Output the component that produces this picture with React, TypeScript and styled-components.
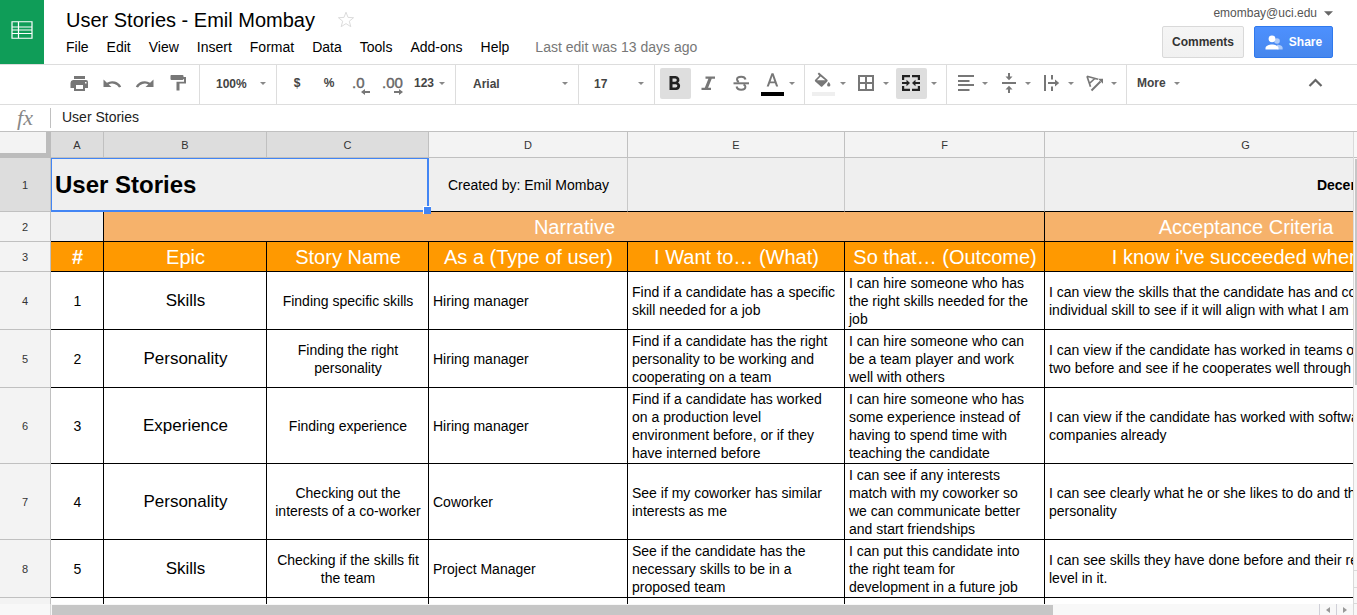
import React from 'react';
import styled, { createGlobalStyle, css } from 'styled-components';

const GlobalStyle = createGlobalStyle`
  *, *::before, *::after { box-sizing: border-box; }
  body { margin: 0; background: #fff; font-family: "Liberation Sans", Arial, sans-serif; color: #000; }
  button, input, select { font: inherit; color: inherit; margin: 0; padding: 0; border: 0; background: none; }
  button { cursor: pointer; }
`;

const Page = styled.div`
  display: flex;
  flex-direction: column;
  height: 100vh;
  overflow: hidden;
`;

/* ---------- header ---------- */

const Header = styled.header`
  display: flex;
  flex: none;
  height: 64px;
`;

const Logo = styled.a`
  display: flex;
  flex: none;
  align-items: center;
  justify-content: center;
  width: 44px;
  padding-bottom: 4px;
  background: #0f9d58;
`;

const TitleArea = styled.div`
  display: flex;
  flex: 1;
  flex-direction: column;
  min-width: 0;
  padding: 8px 0 0 22px;
`;

const TitleRow = styled.div`
  display: flex;
  align-items: center;
  gap: 22px;
  height: 24px;
`;

const Title = styled.h1`
  margin: 0;
  font-size: 20px;
  font-weight: 400;
  line-height: 24px;
  white-space: nowrap;
`;

const StarButton = styled.button`
  display: flex;
`;

const Menu = styled.nav`
  display: flex;
  align-items: center;
  gap: 18px;
  height: 30px;
  font-size: 14px;
  white-space: nowrap;
`;

const EditNote = styled.a`
  margin-left: 8px;
  color: #777;
  text-decoration: none;
`;

const Account = styled.div`
  display: flex;
  flex: none;
  flex-direction: column;
  align-items: flex-end;
  padding: 4px 24px 0 0;
`;

const Email = styled.button`
  display: flex;
  align-items: center;
  gap: 7px;
  height: 18px;
  font-size: 12px;
  color: #555;
`;

const Actions = styled.div`
  display: flex;
  gap: 10px;
  padding-top: 4px;
`;

const ActionButton = styled.button<{ $primary?: boolean }>`
  display: flex;
  align-items: center;
  justify-content: center;
  gap: 6px;
  width: ${p => (p.$primary ? 79 : 82)}px;
  height: 32px;
  border: 1px solid ${p => (p.$primary ? '#3079ed' : '#d9d9d9')};
  border-radius: 2px;
  background: ${p => (p.$primary ? 'linear-gradient(#4d90fe, #4787ed)' : 'linear-gradient(#f5f5f5, #f1f1f1)')};
  color: ${p => (p.$primary ? '#fff' : '#333')};
  font-size: 12px;
  font-weight: 700;
`;

/* ---------- toolbar ---------- */

const Toolbar = styled.div`
  display: flex;
  flex: none;
  height: 41px;
  padding-left: 59px;
  border: solid #ddd;
  border-width: 1px 0;
  color: #444;
  font-size: 12px;
  font-weight: 700;
`;

const Group = styled.div<{ $gap?: number }>`
  display: flex;
  flex: none;
  align-items: flex-start;
  gap: ${p => p.$gap ?? 2}px;
  padding: 3px 5px 0;
  border-right: 1px solid #ddd;
`;

const ToolButton = styled.button<{ $active?: boolean; $width?: number }>`
  display: flex;
  flex: none;
  align-items: center;
  justify-content: center;
  width: ${p => p.$width ?? 31}px;
  height: 31px;
  && { padding: 0 1px 1px 0; }
  border-radius: 2px;
  background: ${p => (p.$active ? '#dedede' : 'transparent')};
  color: ${p => (p.$active ? '#222' : '#777')};
`;

const TextButton = styled(ToolButton)`
  gap: 5px;
  color: #444;
`;

const Split = styled.div`
  display: flex;
  align-items: center;
`;

const Picker = styled.label<{ $width: number; $indent: number }>`
  display: grid;
  flex: none;
  align-items: center;
  align-content: start;
  width: ${p => p.$width}px;
  border-right: 1px solid #ddd;
  select, svg { grid-area: 1 / 1; }
  select {
    width: 100%;
    height: 37px;
    padding-left: ${p => p.$indent}px;
    appearance: none;
    outline: none;
  }
  svg { justify-self: end; margin-right: 10px; pointer-events: none; }
`;

const MoreButton = styled.button`
  display: flex;
  align-items: center;
  gap: 8px;
  height: 36px;
  && { padding: 0 10px; }
`;

const Collapse = styled.div`
  margin-left: auto;
  padding: 3px 26px 0 0;
`;

/* ---------- formula bar ---------- */

const FormulaBar = styled.label`
  display: flex;
  flex: none;
  align-items: flex-start;
  height: 27px;
  border-bottom: 1px solid #c0c0c0;
`;

const Fx = styled.span`
  width: 51px;
  margin-top: 3px;
  border-right: 1px solid #c0c0c0;
  color: #888;
  font: italic 22px/20px "Liberation Serif", serif;
  text-align: center;
`;

const FormulaInput = styled.input`
  flex: 1;
  height: 24px;
  && { padding-left: 11px; }
  outline: none;
  font-size: 14px;
  color: #222;
`;

/* ---------- sheet ---------- */

const Sheet = styled.main`
  display: flex;
  flex: 1;
  min-height: 0;
`;

const SheetColumn = styled.div`
  display: flex;
  flex: 1;
  flex-direction: column;
  min-width: 0;
`;

const Viewport = styled.div`
  flex: 1;
  min-height: 0;
  overflow: hidden;
`;

const Table = styled.table`
  width: 1447px;
  table-layout: fixed;
  border-collapse: separate;
  border-spacing: 0;
  font-size: 14px;
  line-height: 18px;
`;

const Col = styled.col<{ $width: number }>`
  width: ${p => p.$width}px;
`;

const Row = styled.tr<{ $height: number }>`
  height: ${p => p.$height}px;
`;

const Heading = styled.th<{ $selected?: boolean }>`
  padding: 0;
  border: solid #c0c0c0;
  border-width: 0 1px 1px 0;
  background: ${p => (p.$selected ? '#ddd' : '#f3f3f3')};
  color: #333;
  font-size: 11px;
  font-weight: 400;
  line-height: 12px;
`;

const Corner = styled.td`
  padding: 0;
  border: solid #bcbcbc;
  border-width: 0 5px 5px 0;
  background: #f3f3f3;
`;

type Tone = 'plain' | 'top' | 'blank' | 'band' | 'head';

const tones = {
  plain: css`background: #fff;`,
  top: css`background: #efefef; border-right-color: #c8c8c8;`,
  blank: css`background: #efefef;`,
  band: css`background: #f6b26b; color: #fff; font-size: 20px; line-height: 24px;`,
  head: css`background: #f90; color: #fff; font-size: 20px; line-height: 24px;`,
};

const Cell = styled.td<{ $tone?: Tone; $align?: string; $large?: boolean; $bold?: boolean; $nowrap?: boolean }>`
  position: relative;
  padding: 0 3px 0 4px;
  border: solid #000;
  border-width: 0 1px 1px 0;
  text-align: ${p => p.$align ?? 'left'};
  vertical-align: middle;
  white-space: ${p => (p.$nowrap ? 'pre' : 'pre-line')};
  ${p => tones[p.$tone ?? 'plain']}
  ${p => p.$large && css`font-size: 17px;`}
  ${p => p.$bold && css`font-weight: 700;`}
`;

const SheetTitle = styled.strong`
  font-size: 24px;
  line-height: 28px;
`;

const Selection = styled.span`
  position: absolute;
  z-index: 1;
  inset: 0 -1px -1px 0;
  border: solid #4285f4;
  border-width: 1px 2px 2px 1px;
  pointer-events: none;
  &::after {
    content: '';
    position: absolute;
    right: -4px;
    bottom: -4px;
    width: 8px;
    height: 8px;
    border: solid #fff;
    border-width: 1px 0 0 1px;
    background: #4285f4;
  }
`;

const HScroll = styled.div`
  display: flex;
  flex: none;
  height: 11px;
  background: #f8f8f8;
`;

const HScrollGutter = styled.div`
  width: 51px;
  border-right: 1px solid #d9d9d9;
`;

const HScrollTrack = styled.div`
  flex: 1;
  padding: 1px 0 0 1px;
`;

const HScrollThumb = styled.div`
  width: 79%;
  height: 10px;
  background: #c6c6c6;
`;

const HScrollButton = styled.button`
  display: flex;
  align-items: center;
  justify-content: center;
  width: 17px;
  && { border-left: 1px solid #d0d0d8; }
`;

const VScroll = styled.div`
  display: flex;
  flex: none;
  flex-direction: column;
  width: 4px;
  border-left: 1px solid #d9d9d9;
  background: #f8f8f8;
`;

const VScrollTop = styled.div`
  height: 26px;
  border-bottom: 1px solid #c0c0c0;
`;

const VScrollTrack = styled.div`
  flex: 1;
  padding: 1px 0 0 1px;
`;

const VScrollThumb = styled.div`
  height: 55%;
  background: #c6c6c6;
`;

const VScrollStep = styled.div<{ $height: number }>`
  height: ${p => p.$height}px;
  border-top: 1px solid #d9d9d9;
`;

/* ---------- icons ---------- */

const Icon = ({ children }: { children: React.ReactNode }) => (
  <svg width="20" height="20" viewBox="0 0 20 20" fill="currentColor" aria-hidden="true">
    {children}
  </svg>
);

/* a glyph above a bar that shows the current colour */
const SwatchIcon = ({ color, children }: { color: string; children: React.ReactNode }) => (
  <svg width="25" height="26" viewBox="0 0 25 26" fill="currentColor" aria-hidden="true">
    {children}
    <path d="M2 22h23v4H2z" fill={color} />
  </svg>
);

const Caret = ({ color = '#888', wide = false }: { color?: string; wide?: boolean }) => (
  <svg width={wide ? 9 : 6} height={wide ? 5 : 3} viewBox="0 0 8 4" aria-hidden="true">
    <path d="M0 0h8L4 4z" fill={color} />
  </svg>
);

const SheetsIcon = () => (
  <svg width="22" height="18" viewBox="0 0 22 18" fill="none" stroke="#fff" aria-hidden="true">
    <path d="M1 .75h20v16.5H1zM.5 6h21M.5 9h21M.5 12.500h21M7.500 .5v17" strokeWidth="1.2" />
  </svg>
);

const StarIcon = () => (
  <svg width="18" height="18" viewBox="0 0 18 18" fill="none" stroke="#dcdcdc" aria-hidden="true">
    <path d="M9 1.2l2 5.2 5.600.3-4.300 3.500 1.500 5.500L9 12.600l-4.800 3.100 1.500-5.500L1.400 6.700 7 6.400z" />
  </svg>
);

const PeopleIcon = () => (
  <svg width="18" height="15" viewBox="0 0 18 15" fill="#fff" aria-hidden="true">
    <g opacity=".55">
      <circle cx="12" cy="6" r="2.8" />
      <path d="M12 9.8c3 0 5.600 1.300 5.600 3v1.700h-5z" />
    </g>
    <circle cx="7" cy="3.800" r="3.400" />
    <path d="M.5 14.500v-1.600c0-2.200 3.600-3.500 6.500-3.500s6.500 1.300 6.500 3.500v1.600z" />
  </svg>
);

const PrintIcon = () => (
  <Icon>
    <path fillRule="evenodd" d="M5 3h11v3H5zM4 7h13a2 2 0 0 1 2 2v6h-3v3H5v-3H1.500V10a3 3 0 0 1 2.500-3zM7 12v4h7v-4zM16 9v1.500h1.500V9z" />
  </Icon>
);

const UndoIcon = () => (
  <Icon>
    <path d="M1.500 6.500V14H9.500L6.700 11.400A8 8 0 0 1 17 14.600l2.200-.8A10 10 0 0 0 4.900 9.800z" />
  </Icon>
);

const RedoIcon = () => (
  <Icon>
    <path d="M18.500 6.500V14H10.500l2.800-2.600A8 8 0 0 0 3 14.600l-2.200-.8A10 10 0 0 1 15.100 9.800z" />
  </Icon>
);

const PaintIcon = () => (
  <Icon>
    <path d="M3 2h11.500a1 1 0 0 1 1 1v1H18v6.500h-6.500V17.500h-3V8.700H16V6h-.5a1 1 0 0 1-1 1H3.500a1 1 0 0 1-1-1V3a1 1 0 0 1 .5-1z" />
  </Icon>
);

const BoldIcon = () => (
  <Icon>
    <path fillRule="evenodd" d="M4.500 3h6.200a3.800 3.800 0 0 1 2.400 6.700A3.900 3.900 0 0 1 11.200 17H4.500zM7.500 5.500v3.200h2.700a1.600 1.600 0 0 0 0-3.200zM7.500 11.200v3.300h3.200a1.650 1.650 0 0 0 0-3.300z" />
  </Icon>
);

const ItalicIcon = () => (
  <Icon>
    <path d="M7.500 3.500H17V5.800h-3.300l-3.600 8.900H13V17H3.500v-2.300h3.300L10.400 5.800H7.500z" />
  </Icon>
);

const StrikeIcon = () => (
  <Icon>
    <path d="M2.500 9.300h15.500v2H2.500z" />
    <path d="M14.500 6.500C14 4.500 12.300 3.800 10.200 3.800 7.600 3.800 6 4.800 6 6.500c0 1.100.7 1.900 1.800 2.500M12.500 11.500c1.200.5 1.900 1.200 1.900 2.300 0 1.800-1.700 2.900-4.200 2.900-2.500 0-4.300-1.100-4.600-3.200" fill="none" stroke="currentColor" strokeWidth="2" />
  </Icon>
);

const TextColorIcon = () => (
  <SwatchIcon color="#000">
    <path fillRule="evenodd" d="M12.500 3.300h2l4.700 13.200h-2.100l-1.200-3.200h-4.900l-1.200 3.200H7.700zM11.600 11.400h3.700l-1.900-5.400z" />
  </SwatchIcon>
);

const FillIcon = () => (
  <SwatchIcon color="#efefef">
    <path fillRule="evenodd" d="M7.700 3.800L9 2.500l8.300 7.300a1.200 1.200 0 0 1 0 1.700l-4.800 4.800a1.300 1.300 0 0 1-1.900 0L5.200 11.400a1.200 1.200 0 0 1 0-1.700l4-4zM7 10.300h8.300l-4.700-3.800zM18.700 12s1.700 1.800 1.700 2.900a1.600 1.600 0 0 1-3.300 0c0-1.100 1.600-2.900 1.600-2.900z" />
  </SwatchIcon>
);

const BorderIcon = () => (
  <Icon>
    <path fillRule="evenodd" d="M2 2h16v16H2zM4 4v5h5V4zm7 0v5h5V4zM4 11v5h5v-5zm7 0v5h5v-5z" />
  </Icon>
);

const MergeIcon = () => (
  <Icon>
    <path d="M1 2h8v2.200H3.200V7H1zM19 2h-8v2.200h5.800V7H19zM1 18h8v-2.200H3.200V13H1zM19 18h-8v-2.200h5.800V13H19zM1 9h4.500V6.800L9 10l-3.500 3.200V11H1zM19 9h-4.500V6.800L11 10l3.500 3.200V11H19z" />
  </Icon>
);

const AlignIcon = () => (
  <Icon>
    <path d="M3 2h16v2H3zM3 7h11.500v2H3zM3 11h16v2H3zM3 16h11.500v2H3z" />
  </Icon>
);

const VAlignIcon = () => (
  <Icon>
    <path d="M4 9h14v2H4zM10 0h2v3.500h2.500L11 7.200 7.500 3.500H10zM10 20h2v-3.500h2.500L11 12.800 7.500 16.500H10z" />
  </Icon>
);

const WrapIcon = () => (
  <Icon>
    <path d="M3 2h2v16H3zM10 2h2v4.500h-2zM10 13.500h2V18h-2zM7 9h7V6.500l4.200 3.500-4.200 3.500V11H7z" />
  </Icon>
);

const RotateIcon = () => (
  <Icon>
    <path d="M3 3.200l11 3M3 3.200l3.500 10.500M10.800 5.500L5.400 10.500" fill="none" stroke="currentColor" strokeWidth="1.700" />
    <path d="M7.500 17.500L16.500 8.500" fill="none" stroke="currentColor" strokeWidth="2" />
    <path d="M19 5.800v5l-5-5z" />
  </Icon>
);

const DecreaseDecimalIcon = () => (
  <svg width="20" height="26" viewBox="0 0 20 26" aria-hidden="true">
    <text x="1" y="18" fontSize="15" fontWeight="400" fill="#666" stroke="#666" strokeWidth=".4">.0</text>
    <path d="M10 22l4-3v2h5v2h-5v2z" fill="#777" />
  </svg>
);

const IncreaseDecimalIcon = () => (
  <svg width="22" height="26" viewBox="0 0 22 26" aria-hidden="true">
    <text x="0" y="18" fontSize="15" fontWeight="400" fill="#666" stroke="#666" strokeWidth=".4">.00</text>
    <path d="M21 22l-4-3v2h-5v2h5v2z" fill="#777" />
  </svg>
);

const ChevronUp = () => (
  <Icon>
    <path d="M4.500 13L10.500 7l6 6" fill="none" stroke="#666" strokeWidth="2.200" />
  </Icon>
);

/* ---------- data ---------- */

const menus = ['File', 'Edit', 'View', 'Insert', 'Format', 'Data', 'Tools', 'Add-ons', 'Help'];
const columns = [
  { name: 'A', width: 53 },
  { name: 'B', width: 163 },
  { name: 'C', width: 162 },
  { name: 'D', width: 199 },
  { name: 'E', width: 217 },
  { name: 'F', width: 200 },
  { name: 'G', width: 402 },
];

interface Story {
  height: number;
  epic: string;
  name: string;
  user: string;
  want: string;
  outcome: string;
  criteria: string;
}

const stories: Story[] = [
  {
    height: 58,
    epic: 'Skills',
    name: 'Finding specific skills',
    user: 'Hiring manager',
    want: 'Find if a candidate has a specific\nskill needed for a job',
    outcome: 'I can hire someone who has\nthe right skills needed for the\njob',
    criteria: 'I can view the skills that the candidate has and compare each\nindividual skill to see if it will align with what I am looking for',
  },
  {
    height: 58,
    epic: 'Personality',
    name: 'Finding the right\npersonality',
    user: 'Hiring manager',
    want: 'Find if a candidate has the right\npersonality to be working and\ncooperating on a team',
    outcome: 'I can hire someone who can\nbe a team player and work\nwell with others',
    criteria: 'I can view if the candidate has worked in teams of at least\ntwo before and see if he cooperates well through reviews',
  },
  {
    height: 76,
    epic: 'Experience',
    name: 'Finding experience',
    user: 'Hiring manager',
    want: 'Find if a candidate has worked\non a production level\nenvironment before, or if they\nhave interned before',
    outcome: 'I can hire someone who has\nsome experience instead of\nhaving to spend time with\nteaching the candidate',
    criteria: 'I can view if the candidate has worked with software\ncompanies already',
  },
  {
    height: 76,
    epic: 'Personality',
    name: 'Checking out the\ninterests of a co-worker',
    user: 'Coworker',
    want: 'See if my coworker has similar\ninterests as me',
    outcome: 'I can see if any interests\nmatch with my coworker so\nwe can communicate better\nand start friendships',
    criteria: 'I can see clearly what he or she likes to do and their\npersonality',
  },
  {
    height: 58,
    epic: 'Skills',
    name: 'Checking if the skills fit\nthe team',
    user: 'Project Manager',
    want: 'See if the candidate has the\nnecessary skills to be in a\nproposed team',
    outcome: 'I can put this candidate into\nthe right team for\ndevelopment in a future job',
    criteria: 'I can see skills they have done before and their relative\nlevel in it.',
  },
];

const Tool = ({ label, active, width, children }: { label: string; active?: boolean; width?: number; children: React.ReactNode }) => (
  <ToolButton type="button" aria-label={label} $active={active} $width={width}>
    {children}
  </ToolButton>
);

const SplitTool = ({ label, active, children }: { label: string; active?: boolean; children: React.ReactNode }) => (
  <Split>
    <Tool label={label} active={active} width={active ? 31 : 26}>{children}</Tool>
    <Tool label={`${label} options`} width={14}><Caret /></Tool>
  </Split>
);

export default function App() {
  return (
    <Page>
      <GlobalStyle />
      <Header>
        <Logo href="#" aria-label="Sheets home"><SheetsIcon /></Logo>
        <TitleArea>
          <TitleRow>
            <Title>User Stories - Emil Mombay</Title>
            <StarButton type="button" aria-label="Star"><StarIcon /></StarButton>
          </TitleRow>
          <Menu>
            {menus.map(name => <button type="button" key={name}>{name}</button>)}
            <EditNote href="#">Last edit was 13 days ago</EditNote>
          </Menu>
        </TitleArea>
        <Account>
          <Email type="button">emombay@uci.edu <Caret wide color="#666" /></Email>
          <Actions>
            <ActionButton type="button">Comments</ActionButton>
            <ActionButton type="button" $primary><PeopleIcon />Share</ActionButton>
          </Actions>
        </Account>
      </Header>

      <Toolbar>
        <Group>
          <Tool label="Print"><PrintIcon /></Tool>
          <Tool label="Undo"><UndoIcon /></Tool>
          <Tool label="Redo"><RedoIcon /></Tool>
          <Tool label="Paint format"><PaintIcon /></Tool>
        </Group>
        <Picker $width={77} $indent={16}>
          <select aria-label="Zoom"><option>100%</option></select>
          <Caret />
        </Picker>
        <Group $gap={1}>
          <TextButton type="button" aria-label="Format as currency">$</TextButton>
          <TextButton type="button" aria-label="Format as percent">%</TextButton>
          <Tool label="Decrease decimal places"><DecreaseDecimalIcon /></Tool>
          <Tool label="Increase decimal places"><IncreaseDecimalIcon /></Tool>
          <TextButton type="button" $width={40}>123 <Caret /></TextButton>
        </Group>
        <Picker $width={123} $indent={17}>
          <select aria-label="Font"><option>Arial</option></select>
          <Caret />
        </Picker>
        <Picker $width={76} $indent={15}>
          <select aria-label="Font size"><option>17</option></select>
          <Caret />
        </Picker>
        <Group>
          <Tool label="Bold" active><BoldIcon /></Tool>
          <Tool label="Italic"><ItalicIcon /></Tool>
          <Tool label="Strikethrough"><StrikeIcon /></Tool>
          <SplitTool label="Text color"><TextColorIcon /></SplitTool>
        </Group>
        <Group $gap={3}>
          <SplitTool label="Fill color"><FillIcon /></SplitTool>
          <SplitTool label="Borders"><BorderIcon /></SplitTool>
          <SplitTool label="Merge cells" active><MergeIcon /></SplitTool>
        </Group>
        <Group $gap={3}>
          <SplitTool label="Horizontal align"><AlignIcon /></SplitTool>
          <SplitTool label="Vertical align"><VAlignIcon /></SplitTool>
          <SplitTool label="Text wrapping"><WrapIcon /></SplitTool>
          <SplitTool label="Text rotation"><RotateIcon /></SplitTool>
        </Group>
        <MoreButton type="button">More <Caret /></MoreButton>
        <Collapse><Tool label="Hide the menus"><ChevronUp /></Tool></Collapse>
      </Toolbar>

      <FormulaBar>
        <Fx>fx</Fx>
        <FormulaInput aria-label="Formula" defaultValue="User Stories" />
      </FormulaBar>

      <Sheet>
        <SheetColumn>
          <Viewport>
            <Table>
              <colgroup>
                <Col $width={51} />
                {columns.map(c => <Col key={c.name} $width={c.width} />)}
              </colgroup>
              <thead>
                <Row $height={26}>
                  <Corner />
                  {columns.map((c, i) => <Heading key={c.name} scope="col" $selected={i < 3}>{c.name}</Heading>)}
                </Row>
              </thead>
              <tbody>
                <Row $height={54}>
                  <Heading scope="row" $selected>1</Heading>
                  <Cell colSpan={3} $tone="top">
                    <SheetTitle>User Stories</SheetTitle>
                    <Selection />
                  </Cell>
                  <Cell $tone="top" $align="center">Created by: Emil Mombay</Cell>
                  <Cell $tone="top" />
                  <Cell $tone="top" />
                  <Cell $tone="top" $align="right" $bold>December 05, 2016</Cell>
                </Row>
                <Row $height={30}>
                  <Heading scope="row">2</Heading>
                  <Cell $tone="blank" />
                  <Cell colSpan={5} $tone="band" $align="center">Narrative</Cell>
                  <Cell $tone="band" $align="center">Acceptance Criteria</Cell>
                </Row>
                <Row $height={30}>
                  <Heading scope="row">3</Heading>
                  <Cell $tone="head" $align="center" $bold>#</Cell>
                  <Cell $tone="head" $align="center">Epic</Cell>
                  <Cell $tone="head" $align="center">Story Name</Cell>
                  <Cell $tone="head" $align="center">As a (Type of user)</Cell>
                  <Cell $tone="head" $align="center">I Want to… (What)</Cell>
                  <Cell $tone="head" $align="center">So that… (Outcome)</Cell>
                  <Cell $tone="head" $align="center">I know i've succeeded when…</Cell>
                </Row>
                {stories.map((s, i) => (
                  <Row key={i} $height={s.height}>
                    <Heading scope="row">{i + 4}</Heading>
                    <Cell $align="center">{i + 1}</Cell>
                    <Cell $align="center" $large>{s.epic}</Cell>
                    <Cell $align="center" $nowrap>{s.name}</Cell>
                    <Cell>{s.user}</Cell>
                    <Cell $nowrap>{s.want}</Cell>
                    <Cell $nowrap>{s.outcome}</Cell>
                    <Cell $nowrap>{s.criteria}</Cell>
                  </Row>
                ))}
                <Row $height={58}>
                  <Heading scope="row" />
                  {columns.map(c => <Cell key={c.name} />)}
                </Row>
              </tbody>
            </Table>
          </Viewport>
          <HScroll>
            <HScrollGutter />
            <HScrollTrack><HScrollThumb /></HScrollTrack>
            <HScrollButton type="button" aria-label="Scroll left">
              <svg width="4" height="6" viewBox="0 0 4 6" aria-hidden="true"><path d="M4 0v6L0 3z" fill="#999" /></svg>
            </HScrollButton>
            <HScrollButton type="button" aria-label="Scroll right">
              <svg width="4" height="6" viewBox="0 0 4 6" aria-hidden="true"><path d="M0 0v6l4-3z" fill="#999" /></svg>
            </HScrollButton>
          </HScroll>
        </SheetColumn>
        <VScroll>
          <VScrollTop />
          <VScrollTrack><VScrollThumb /></VScrollTrack>
          <VScrollStep $height={17} />
          <VScrollStep $height={16} />
          <VScrollStep $height={12} />
        </VScroll>
      </Sheet>
    </Page>
  );
}
